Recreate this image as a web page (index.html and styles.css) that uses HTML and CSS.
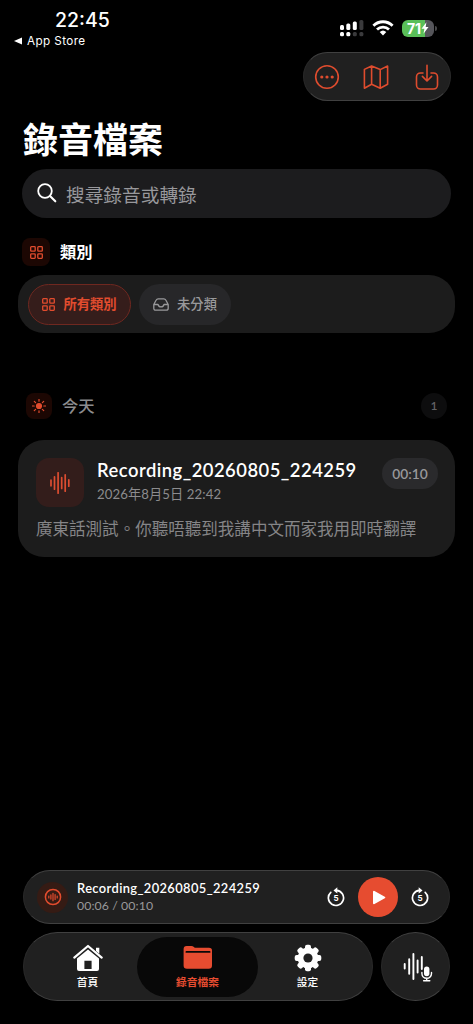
FILE: index.html
```html
<!DOCTYPE html>
<html lang="zh-Hant">
<head>
<meta charset="utf-8">
<meta name="viewport" content="width=device-width, initial-scale=1">
<title>錄音檔案</title>
<link rel="stylesheet" href="styles.css">
</head>
<body>
<div class="screen">
  <header class="status">
    <div class="status-left">
      <div class="clock">22:45</div>
      <div class="back"><svg width="8" height="8" viewBox="0 0 8 8"><path d="M0 4 8 .4v7.2z" fill="#fff"/></svg><span>App Store</span></div>
    </div>
    <div class="status-right">
      <svg width="25" height="17" viewBox="0 0 25 17">
        <g fill="#fff"><rect x="1" y="5" width="4" height="5" rx="1.5"/><rect x="7.3" y="3.5" width="4" height="6.5" rx="1.5"/><rect x="13.8" y="1.5" width="4" height="8.5" rx="1.5"/><rect x="1" y="12" width="4" height="4.2" rx="1.5"/><rect x="7.3" y="12" width="4" height="4.2" rx="1.5"/></g>
        <g fill="#3a3a3c"><rect x="20.4" y="0" width="4" height="10" rx="1.5"/><rect x="13.8" y="12" width="4" height="4.2" rx="1.5"/><rect x="20.4" y="12" width="4" height="4.2" rx="1.5"/></g>
      </svg>
      <svg class="wifi" width="22" height="16" viewBox="0 0 22 16"><g fill="none" stroke="#fff" stroke-width="2.8"><path d="M1.4 5.7a13.7 13.7 0 0 1 19.2 0"/><path d="M5 9.5a8.6 8.6 0 0 1 12 0"/></g><path d="M7.7 12a4.8 4.8 0 0 1 6.6 0L11 15.4z" fill="#fff"/></svg>
      <div class="battery"><span>71</span><svg width="8" height="12" viewBox="0 0 8 12"><path d="M5.4.3.5 6.7h2.9L2.5 11.7 7.5 5H4.7z" fill="#fff"/></svg></div>
      <div class="battery-cap"></div>
    </div>
  </header>

  <div class="toolbar glass">
    <svg width="26" height="26" viewBox="0 0 26 26"><circle cx="13" cy="13" r="11.3" class="line"/><g fill="#df4c2e"><circle cx="7.8" cy="13" r="1.6"/><circle cx="13" cy="13" r="1.6"/><circle cx="18.2" cy="13" r="1.6"/></g></svg>
    <svg width="28" height="26" viewBox="0 0 28 26"><path class="line" d="M1.4 5.4 8.6 2l8.6 3.6L24.6 2v18.2l-7.4 4-8.6-4-7.2 4zM8.6 2v18.2M17.2 5.6v18.6"/></svg>
    <svg width="26" height="26" viewBox="0 0 26 26"><path class="line" d="M9 9H6.500a4 4 0 0 0-4 4v8a4 4 0 0 0 4 4h13a4 4 0 0 0 4-4v-8a4 4 0 0 0-4-4H17M13 1.200v15.400M8.400 12.400l4.600 4.600 4.600-4.600"/></svg>
  </div>

  <h1 class="title">錄音檔案</h1>

  <div class="search">
    <svg width="20" height="20" viewBox="0 0 20 20"><circle cx="8" cy="8" r="6.8" fill="none" stroke="#fff" stroke-width="1.8"/><path d="m13 13 5.3 5.3" stroke="#fff" stroke-width="2.1" stroke-linecap="round"/></svg>
    <span>搜尋錄音或轉錄</span>
  </div>

  <div class="section-head">
    <div class="mini"><svg class="grid" width="13" height="13" viewBox="0 0 13 13"><rect x=".7" y=".7" width="4.5" height="4.5" rx=".7"/><rect x="7.8" y=".7" width="4.5" height="4.5" rx=".7"/><rect x=".7" y="7.8" width="4.5" height="4.5" rx=".7"/><rect x="7.8" y="7.8" width="4.5" height="4.5" rx=".7"/></svg></div>
    <h2>類別</h2>
  </div>

  <div class="categories">
    <div class="chip active"><svg class="grid" width="13" height="13" viewBox="0 0 13 13"><rect x=".7" y=".7" width="4.5" height="4.5" rx=".7"/><rect x="7.8" y=".7" width="4.5" height="4.5" rx=".7"/><rect x=".7" y="7.8" width="4.5" height="4.5" rx=".7"/><rect x="7.8" y="7.8" width="4.5" height="4.5" rx=".7"/></svg><span>所有類別</span></div>
    <div class="chip"><svg width="16" height="13" viewBox="0 0 16 13"><path d="M.8 6.500 3.200 2Q3.800.8 5.200.8h5.600q1.400 0 2 1.200l2.400 4.500v3.700q0 2-2 2H2.800q-2 0-2-2zM.8 6.500h4.200Q5.700 8.900 8 8.900t3-2.400h4.200" fill="none" stroke="#99999b" stroke-width="1.3" stroke-linejoin="round"/></svg><span>未分類</span></div>
  </div>

  <div class="day-head">
    <div class="mini small"><svg width="14" height="14" viewBox="0 0 14 14"><circle cx="7" cy="7" r="3.1" fill="#e24c2e"/><path d="M7 .4v1.8M7 11.8v1.8M.4 7h1.800M11.800 7h1.800M2.300 2.300l1.300 1.300M10.400 10.400l1.300 1.300M2.300 11.700l1.300-1.300M10.400 3.600l1.300-1.300" stroke="#e24c2e" stroke-width="1.2" stroke-linecap="round"/></svg></div>
    <h2>今天</h2>
    <div class="count">1</div>
  </div>

  <article class="card">
    <div class="card-top">
      <div class="wave-box"><svg width="20" height="22" viewBox="0 0 20 22"><path d="M1 8.200v5.600M4.500 4.800v12.400M8.100.8v20.400M11.700 5.600v10.800M15.200 2.800v16.400M18.800 7.800v6.400" stroke="#dd4d31" stroke-width="1.7" stroke-linecap="round"/></svg></div>
      <div class="card-text">
        <div class="card-title">Recording_20260805_224259</div>
        <div class="card-date">2026年8月5日 22:42</div>
      </div>
      <div class="length">00:10</div>
    </div>
    <p class="transcript">廣東話測試。你聽唔聽到我講中文而家我用即時翻譯</p>
  </article>

  <div class="player glass">
    <div class="player-icon"><svg width="18" height="18" viewBox="0 0 18 18"><circle cx="9" cy="9" r="7.600" fill="none" stroke="#e24c2e" stroke-width="1.500"/><path d="M4.800 8v2M6.900 6.900v4.200M9 5.300v7.400M11.100 6.600v4.800M13.200 8v2" stroke="#e24c2e" stroke-width="1.200" stroke-linecap="round"/></svg></div>
    <div class="player-text">
      <div class="player-title">Recording_20260805_224259</div>
      <div class="player-time">00:06 / 00:10</div>
    </div>
    <div class="controls">
      <svg width="18" height="20" viewBox="0 0 18 20"><path d="M3.800 5.300A7.600 7.600 0 1 0 9.600 3.300" class="turn"/><path d="M6.500 3.400 10.300.3v6.200z" fill="#fff"/><text x="9" y="13.800" class="five">5</text></svg>
      <div class="play"><svg width="14" height="15" viewBox="0 0 14 15"><path d="M2 1.800v11.400L12.300 7.500z" fill="#fff" stroke="#fff" stroke-width="2" stroke-linejoin="round"/></svg></div>
      <svg width="18" height="20" viewBox="0 0 18 20"><path d="M14.200 5.300A7.600 7.600 0 1 1 8.400 3.300" class="turn"/><path d="M11.500 3.400 7.700.3v6.200z" fill="#fff"/><text x="9" y="13.800" class="five">5</text></svg>
    </div>
  </div>

  <div class="bottom">
    <nav class="tabs glass">
      <a class="tab"><svg width="30" height="28" viewBox="0 0 30 28"><path d="M1.300 13.600 15 2l13.700 11.600" fill="none" stroke="#fff" stroke-width="2.200" stroke-linecap="round" stroke-linejoin="round"/><path d="M23 3.800h3.300v6L23 7z" fill="#fff"/><path fill-rule="evenodd" d="M4 14.600 15 5.500l11 9.100v10.400q0 2-2 2H6q-2 0-2-2zM11.400 16.800V25h7.200v-8.200z" fill="#fff"/></svg><span>首頁</span></a>
      <a class="tab selected"><svg width="30" height="28" viewBox="0 0 30 28"><path d="M.6 7V5q0-3 3-3h4.800q1.500 0 2.500 1l.9.800h14.200q3 0 3 2.800V21.500q0 3.300-3.300 3.300H3.900q-3.300 0-3.300-3.300z" fill="#e64c30"/><path d="M3.400 7.900h23.200" stroke="#080808" stroke-width="1.800" stroke-linecap="round"/></svg><span>錄音檔案</span></a>
      <a class="tab"><svg width="28" height="28" viewBox="0 0 28 28"><g fill="#fff"><rect x="11" y=".7" width="6" height="26.600" rx="2"/><rect x="11" y=".7" width="6" height="26.600" rx="2" transform="rotate(45 14 14)"/><rect x="11" y=".7" width="6" height="26.600" rx="2" transform="rotate(90 14 14)"/><rect x="11" y=".7" width="6" height="26.600" rx="2" transform="rotate(135 14 14)"/><circle cx="14" cy="14" r="10.400"/></g><circle cx="14" cy="14" r="4.600" fill="#202020"/></svg><span>設定</span></a>
    </nav>
    <div class="record glass"><svg width="30" height="30" viewBox="0 0 30 30"><path d="M1.700 12v4.500M6.200 7.200v14.600M10.400 2v25M14.600 8.500v12M18.800 5v12" stroke="#fff" stroke-width="1.900" stroke-linecap="round"/><rect x="21" y="14.500" width="5.400" height="9.800" rx="2.700" fill="#fff"/><path d="M18.900 20.500v1a4.800 4.800 0 0 0 9.600 0v-1M23.700 26.300v2.200M20.600 28.700h6.200" fill="none" stroke="#fff" stroke-width="1.400" stroke-linecap="round"/></svg></div>
  </div>
</div>
</body>
</html>
```

FILE: styles.css
```css
* { box-sizing: border-box; }
body { margin: 0; background: #000; }
svg { display: block; flex: none; }
h1, h2, p { margin: 0; }

.screen {
  width: 473px;
  height: 1024px;
  display: flex;
  flex-direction: column;
  background: #000;
  color: #fff;
  font-family: Lato, "Noto Sans CJK TC", sans-serif;
  overflow: hidden;
  white-space: nowrap;
}
.glass {
  background: #202020;
  border: 1px solid #292929;
  border-top-color: #404040;
  border-bottom-color: #404040;
}
.line { fill: none; stroke: #df4c2e; stroke-width: 1.6; stroke-linejoin: round; stroke-linecap: round; }
.grid { fill: none; stroke: #e24c2e; stroke-width: 1.3; }

.status { height: 52px; flex: none; display: flex; justify-content: space-between; padding: 9px 36px 0 14px; font-family: Inter, sans-serif; }
.clock { margin-left: 41px; height: 22px; font-size: 19.5px; line-height: 23px; font-weight: 500; letter-spacing: 0; }
.back { display: flex; align-items: center; gap: 5px; height: 20px; font-size: 11.7px; font-weight: 400; letter-spacing: 0.4px; }
.status-right { display: flex; align-items: center; height: 38px; }
.wifi { margin: 0 8px; }
.battery { width: 32px; height: 17px; border-radius: 6px; background: linear-gradient(90deg, #5abf58 71%, #55555a 71%); display: flex; align-items: center; justify-content: center; font-size: 14px; font-weight: 700; }
.battery-cap { width: 2px; height: 5px; margin-left: 1px; border-radius: 0 2px 2px 0; background: #48484a; }

.toolbar { width: 148px; height: 49px; flex: none; align-self: flex-end; margin-right: 22px; border-radius: 25px; display: flex; align-items: center; justify-content: space-between; padding: 0 10px; }

.title { height: 68px; flex: none; padding: 13px 0 0 23px; font-size: 35px; line-height: 51px; font-weight: 700; }

.search { height: 49px; flex: none; margin: 0 22px; border-radius: 25px; background: #1c1c1e; display: flex; align-items: center; gap: 9px; padding: 0 0 1px 15px; font-size: 18.7px; color: #98989c; }

.section-head { display: flex; align-items: center; gap: 10px; height: 28px; flex: none; margin: 20px 0 9px 22px; }
.section-head h2 { font-size: 16.3px; font-weight: 700; margin-top: -2px; }
.mini { width: 28px; height: 28px; border-radius: 8px; background: #1c0703; display: flex; align-items: center; justify-content: center; }

.categories { height: 58px; flex: none; margin: 0 18px; border-radius: 26px; background: #1c1c1c; display: flex; align-items: center; gap: 8px; padding-left: 10px; }
.chip { height: 41px; width: 92px; border-radius: 21px; background: #272729; display: flex; align-items: center; justify-content: center; gap: 8px; font-size: 13.3px; font-weight: 500; color: #99999b; }
.chip span { margin-top: -2px; }
.chip.active { width: 103px; background: #351d1b; border: 1px solid #6f2820; color: #e24c2e; font-weight: 700; }

.day-head { height: 28px; flex: none; margin: 59px 26px 20px; display: flex; align-items: center; }
.mini.small { width: 26px; height: 26px; }
.day-head h2 { margin: -2px 0 0 10px; font-size: 16.3px; font-weight: 500; color: #8c8c8e; }
.count { margin-left: auto; width: 26px; height: 26px; border-radius: 50%; background: #0d0d0e; color: #626264; font: 600 12px/26px Lato, sans-serif; text-align: center; }

.card { height: 117px; flex: none; margin: 0 18px; padding: 18px; border-radius: 26px; background: #1c1c1c; }
.card-top { display: flex; height: 49px; }
.wave-box { width: 48px; height: 49px; border-radius: 13px; background: #331d1b; display: flex; align-items: center; justify-content: center; }
.card-text { margin-left: 13px; }
.card-title { height: 25px; line-height: 24px; font-size: 18.4px; font-weight: 600; letter-spacing: 0.48px; }
.card-date { height: 22px; line-height: 23px; font-size: 13.2px; color: #8c8c8e; letter-spacing: 0.1px; }
.length { margin: 0 -1px 0 auto; width: 56px; height: 31px; border-radius: 16px; background: #2a2a2c; color: #98989b; font-size: 13.8px; line-height: 31px; font-weight: 600; text-align: center; }
.transcript { margin-top: 9px; font-size: 16.55px; line-height: 26px; color: #858587; }

.player { width: 427px; height: 54px; flex: none; margin: 313px 0 0 23px; border-radius: 27px; display: flex; align-items: center; padding: 0 20px 0 13px; }
.player-icon { width: 31px; height: 31px; border-radius: 50%; background: #351b14; display: flex; align-items: center; justify-content: center; }
.player-text { margin-left: 9px; padding-bottom: 1px; }
.player-title { height: 18px; line-height: 18px; font-size: 12.9px; font-weight: 600; letter-spacing: 0.38px; }
.player-time { height: 17px; line-height: 17px; font-size: 12.3px; color: #99999a; letter-spacing: 0.08px; }
.controls { margin-left: auto; display: flex; align-items: center; gap: 13px; }
.play { width: 40px; height: 40px; border-radius: 50%; background: #e64c30; display: flex; align-items: center; justify-content: center; padding-left: 1px; }
.turn { fill: none; stroke: #fff; stroke-width: 1.7; stroke-linecap: round; }
.five { font: 700 8px Inter, sans-serif; fill: #fff; text-anchor: middle; }

.bottom { display: flex; gap: 8px; margin: 8px 0 0 23px; }
.tabs { width: 350px; height: 69px; border-radius: 35px; display: flex; align-items: center; padding: 0 4px; }
.tab { width: 110px; height: 60px; display: flex; flex-direction: column; align-items: center; padding-top: 7px; font-size: 10.7px; line-height: 16px; font-weight: 500; border-radius: 30px; }
.tab span { margin-top: 2px; }
.tab:first-child { width: 109px; padding-left: 10px; }
.tab:last-child { width: 99px; }
.tab.selected { width: 121px; background: #080808; color: #e64c30; font-weight: 700; }
.record { width: 69px; height: 69px; border-radius: 50%; display: flex; align-items: center; justify-content: center; padding-left: 5px; }
```
